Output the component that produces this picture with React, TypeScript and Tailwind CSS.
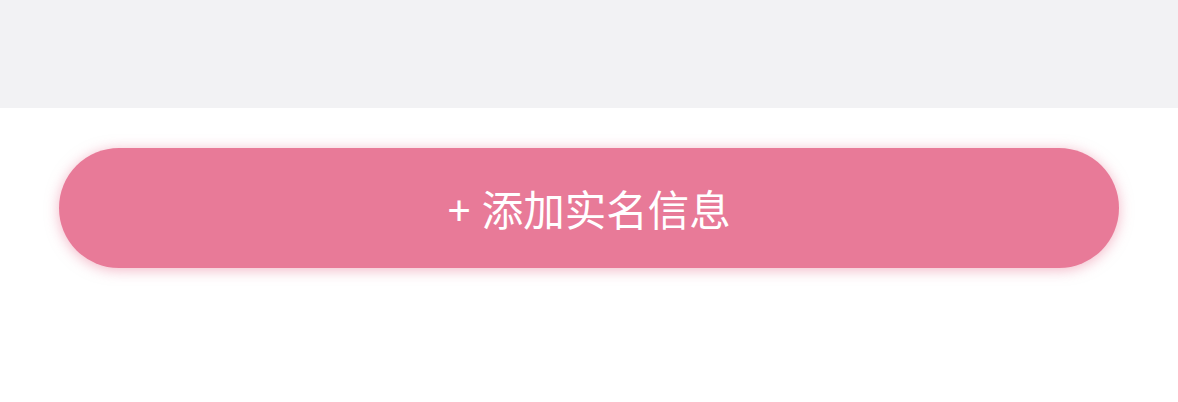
export default function App() {
  return (
    <div className="min-h-[402px] w-full bg-white font-['Noto_Sans','Noto_Sans_CJK_SC',sans-serif]">
      <div className="h-[108px] bg-[#f2f2f4]" />
      <div className="px-[59px] pt-[40px]">
        <button
          type="button"
          className="flex h-[120px] w-full items-center justify-center rounded-full bg-[#e87a98] pt-[5px] text-[41.5px] leading-none text-white shadow-[0_2px_14px_rgba(232,122,152,0.55)]"
        >
          + 添加实名信息
        </button>
      </div>
    </div>
  );
}
